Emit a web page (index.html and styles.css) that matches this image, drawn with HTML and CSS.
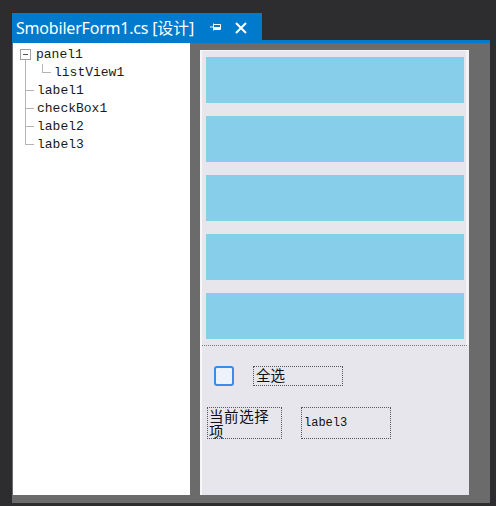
FILE: index.html
```html
<!DOCTYPE html>
<html lang="zh-CN">
<head>
    <meta charset="UTF-8">
    <title>SmobilerForm1.cs [设计]</title>
    <link rel="stylesheet" href="styles.css">
</head>
<body>
    <div class="window">
        <div class="tabbar">
            <div class="tab">
                <span class="tab-title">SmobilerForm1.cs [设计]</span>
                <svg class="pin" width="11" height="8" viewBox="0 0 11 8">
                    <path d="M0 4H3M3.5 0.5V7.5M4 1.5H10.5V6.5H4" fill="none" stroke="#fff" stroke-width="1"/>
                    <rect x="4" y="4" width="6" height="2" fill="#fff"/>
                </svg>
                <svg class="close" width="12" height="12" viewBox="0 0 12 12">
                    <path d="M1 1L11 11M11 1L1 11" stroke="#fff" stroke-width="2"/>
                </svg>
            </div>
        </div>
        <div class="tab-line"></div>

        <div class="workspace">
            <!-- document outline -->
            <div class="tree">
                <div class="node">
                    <span class="expander"><span class="box"></span><span class="stub"></span></span>
                    <span>panel1</span>
                </div>
                <div class="node">
                    <span class="pipe"></span>
                    <span class="elbow sub last"></span>
                    <span>listView1</span>
                </div>
                <div class="node"><span class="elbow"></span><span>label1</span></div>
                <div class="node"><span class="elbow"></span><span>checkBox1</span></div>
                <div class="node"><span class="elbow"></span><span>label2</span></div>
                <div class="node"><span class="elbow last"></span><span>label3</span></div>
            </div>

            <!-- design surface -->
            <div class="surface">
                <div class="form">
                    <div class="listview">
                        <div class="item"></div>
                        <div class="item"></div>
                        <div class="item"></div>
                        <div class="item"></div>
                        <div class="item"></div>
                    </div>
                    <div class="check-row">
                        <span class="checkbox"></span>
                        <span class="label label-all">全选</span>
                    </div>
                    <div class="info-row">
                        <span class="label label-current">当前选择项</span>
                        <span class="label label-value">label3</span>
                    </div>
                </div>
            </div>
        </div>
    </div>
</body>
</html>
```

FILE: styles.css
```css
body {
    margin: 0;
    width: 496px;
    height: 506px;
    overflow: hidden;
    background: #2d2d30;
    font-family: "Liberation Mono", monospace;
}
.window {
    margin-left: 12px;
    padding-top: 13px;
    width: 478px;
}
.tabbar {
    height: 27px;
    display: flex;
}
.tab {
    width: 250px;
    background: #007acc;
    color: #fff;
    display: flex;
    align-items: center;
    padding-left: 4px;
    box-sizing: border-box;
}
.tab-title {
    font-family: "Noto Sans", "Noto Sans CJK SC", sans-serif;
    font-size: 16px;
    letter-spacing: -0.2px;
    white-space: nowrap;
}
.pin {
    margin-left: 16px;
    margin-top: 1px;
}
.close {
    margin-left: 14px;
    margin-top: 2px;
}
.tab-line {
    height: 3px;
    background: #007acc;
}
.workspace {
    display: flex;
    height: 460px;
    background: #6b6b6b;
    padding-left: 1px;
    box-sizing: border-box;
}

/* outline tree */
.tree {
    width: 177px;
    height: 452px;
    background: #fff;
    padding-top: 3px;
    box-sizing: border-box;
    font-size: 13px;
    color: #1a1a1a;
}
.node {
    display: flex;
    align-items: flex-start;
    height: 18px;
    line-height: 18px;
}
.expander {
    display: flex;
    flex-direction: column;
    width: 11px;
    margin-left: 7px;
    margin-right: 5px;
    padding-top: 3px;
}
.box {
    width: 9px;
    height: 9px;
    border: 1px solid #a0a0a0;
    background: linear-gradient(#555, #555) center / 5px 1px no-repeat;
}
.stub {
    width: 0;
    height: 4px;
    margin-left: 5px;
    border-left: 1px solid #b4b4b4;
}
.pipe {
    width: 0;
    height: 18px;
    margin-left: 12px;
    border-left: 1px solid #b4b4b4;
}
.elbow {
    width: 9px;
    height: 18px;
    margin-left: 12px;
    margin-right: 2px;
    border-left: 1px solid #b4b4b4;
}
.elbow::after {
    content: "";
    display: block;
    margin-top: 8px;
    width: 8px;
    border-top: 1px solid #b4b4b4;
}
.elbow.last {
    height: 9px;
}
.elbow.sub {
    margin-left: 16px;
}

/* design surface */
.surface {
    flex: 1;
    padding: 7px 21px 8px 10px;
}
.form {
    height: 445px;
    background: #e8e6ed;
    border-top: 1px solid #f6f6f8;
    border-left: 2px solid #f6f6f8;
    box-sizing: border-box;
}
.listview {
    display: flex;
    flex-direction: column;
    gap: 13px;
    padding: 6px 2px 6px 4px;
    border-right: 3px solid #f3f2f6;
    border-bottom: 1px dotted #7a7a7a;
}
.item {
    height: 46px;
    background: #87ceea;
}
.check-row {
    display: flex;
    align-items: center;
    margin-top: 20px;
    padding-left: 12px;
}
.checkbox {
    width: 16px;
    height: 16px;
    border: 2px solid #3d8be8;
    border-radius: 3px;
    background: #eef2fb;
}
.label {
    border: 1px dotted #555;
    box-sizing: border-box;
    font-family: "Noto Sans CJK SC", sans-serif;
    font-size: 14px;
    color: #111;
}
.label-all {
    width: 90px;
    height: 20px;
    margin-left: 19px;
    line-height: 16px;
    padding-left: 2px;
    font-size: 14.5px;
}
.info-row {
    display: flex;
    margin-top: 21px;
    padding-left: 5px;
    gap: 19px;
}
.label-current {
    width: 75px;
    height: 32px;
    line-height: 15px;
    padding-left: 1px;
    font-size: 14.5px;
    letter-spacing: 0.6px;
    word-break: break-all;
}
.label-value {
    width: 90px;
    height: 32px;
    line-height: 30px;
    padding-left: 2px;
    font-family: "Liberation Mono", monospace;
    font-size: 12px;
}
```
